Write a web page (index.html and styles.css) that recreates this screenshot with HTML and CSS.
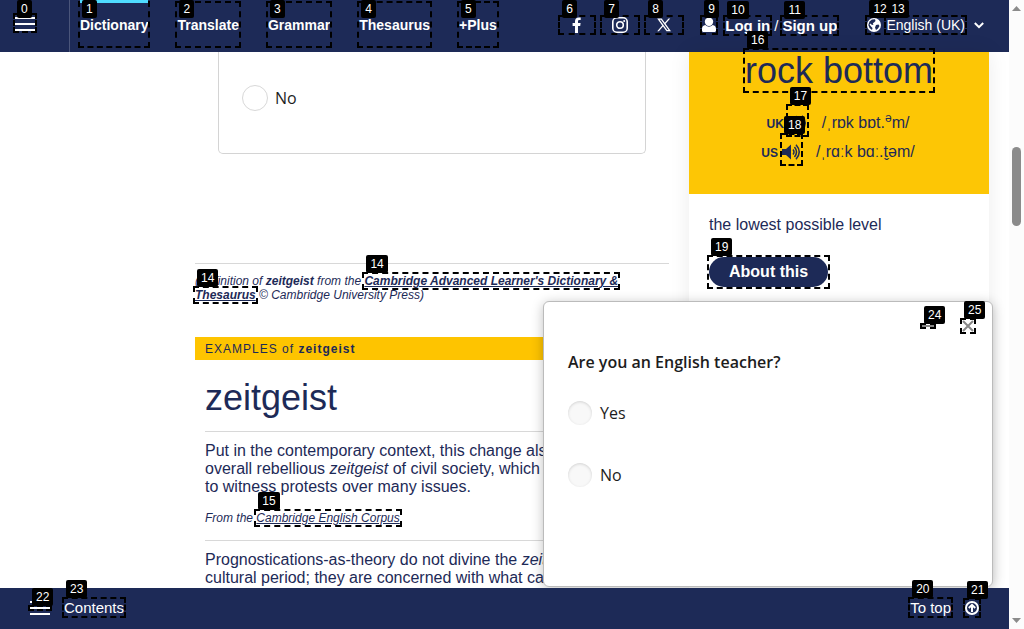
FILE: index.html
```html
<!DOCTYPE html>
<html lang="en">
<head>
<meta charset="utf-8">
<title>zeitgeist | Dictionary</title>
<meta name="viewport" content="width=device-width, initial-scale=1">
<link rel="stylesheet" href="styles.css">
</head>
<body>
<div class="app">
  <header class="header">
    <div class="menu-cell">
      <button class="menu target" type="button" aria-label="Open menu"><span class="bar"></span><span class="bar"></span><span class="bar"></span><span class="hint">0</span></button>
    </div>
    <nav class="nav" aria-label="Main">
      <a class="nav-link current target" href="#dictionary">Dictionary<span class="hint">1</span></a>
      <a class="nav-link target" href="#translate">Translate<span class="hint">2</span></a>
      <a class="nav-link target" href="#grammar">Grammar<span class="hint">3</span></a>
      <a class="nav-link target" href="#thesaurus">Thesaurus<span class="hint">4</span></a>
      <a class="nav-link target" href="#plus">+Plus<span class="hint">5</span></a>
    </nav>
    <div class="social">
      <a class="social-link target" href="#facebook" aria-label="Facebook"><svg width="14" height="16" viewBox="-2 0 14 16"><path fill="#fff" d="M3 16V9H.6V6.100H3V4.200C3 1.700 4.500.4 6.700.4c1 0 2 .2 2 .2V3H7.400C6.300 3 6 3.600 6 4.300v1.800h2.600L8.200 9H6v7z"/></svg><span class="hint">6</span></a>
      <a class="social-link target" href="#instagram" aria-label="Instagram"><svg width="16" height="16" viewBox="0 0 16 16" fill="none" stroke="#fff"><rect x=".8" y=".8" width="14.400" height="14.400" rx="4" stroke-width="1.600"/><circle cx="8" cy="8" r="3.300" stroke-width="1.600"/><circle cx="12.200" cy="3.900" r="1" fill="#fff" stroke="none"/></svg><span class="hint">7</span></a>
      <a class="social-link target" href="#x" aria-label="X"><svg width="16" height="16" viewBox="0 0 16 16"><path fill="#fff" fill-rule="evenodd" d="M1.200 1.500h4.500l3.100 4.200 3.700-4.200h1.700L9.600 6.800l5.400 7.400h-4.500L7 9.500l-4.100 4.700H1.200l5-5.800zm2.500 1.300 7.500 10.100h1.300L5 2.800z"/></svg><span class="hint">8</span></a>
    </div>
    <div class="account">
      <a class="user target" href="#account" aria-label="Account"><svg width="14" height="16" viewBox="0 0 14 16" fill="#fff"><circle cx="7" cy="4.800" r="4.200"/><path d="M3.500 8C1 8.400 0 9.800 0 12v1.500C0 14.300.7 15 1.500 15h11c.8 0 1.500-.7 1.500-1.500V12c0-2.200-1-3.600-3.500-4-2 2.200-5 2.200-7 0z"/></svg><span class="hint">9</span></a>
      <div class="auth"><a class="auth-link target" href="#login">Log in<span class="hint">10</span></a><span>/</span><a class="auth-link target" href="#signup">Sign up<span class="hint">11</span></a></div>
    </div>
    <div class="language">
      <button class="lang target" type="button"><svg width="14" height="14" viewBox="0 0 14 14"><circle cx="7" cy="7" r="7" fill="#fff"/><path fill="#1d2a57" d="M5 1.500 8 1.200 8.500 3 7 4.500 5.800 5.200 6.500 6.500 5 7 3.500 5.500 2.500 6.500 4 8.500 5.500 10 5 12 2.500 10 1.300 7 2.500 3.500zM9 7l2.500-.5 1 1.500-1.500 2.500L9 12 8 9.500z"/></svg><span class="hint">12</span><span class="lang-name target">English (UK)<span class="hint">13</span></span></button>
      <svg width="10" height="7" viewBox="0 0 10 7" fill="none" stroke="#fff" stroke-width="2"><path d="M.8 1 5 5.200 9.200 1"/></svg>
    </div>
  </header>

  <main class="main">
    <article class="entry">
      <div class="poll">
        <label class="choice"><input class="radio outlined" type="radio" name="poll"><span>No</span></label>
      </div>
      <p class="source">(Definition of <b>zeitgeist</b> from the <a class="source-link target" href="#cald"><span class="hint">14</span>Cambridge Advanced Learner's Dictionary &amp; <span class="fragment">Thesaurus<span class="hint">14</span></span></a> © Cambridge University Press)</p>
      <div class="band">EXAMPLES of <b>zeitgeist</b></div>
      <section class="examples">
        <h2 class="word">zeitgeist</h2>
        <div class="example">
          <p class="quote">Put in the contemporary context, this change also<br>overall rebellious <i>zeitgeist</i> of civil society, which<br>to witness protests over many issues.</p>
          <p class="origin">From the <a class="target" href="#corpus">Cambridge English Corpus<span class="hint">15</span></a></p>
        </div>
        <div class="example">
          <p class="quote">Prognostications-as-theory do not divine the <i>zeitgeist</i><br>cultural period; they are concerned with what can</p>
        </div>
      </section>
    </article>

    <aside class="daily">
      <div class="daily-head">
        <h2 class="daily-word"><a class="target" href="#rock-bottom">rock bottom<span class="hint">16</span></a></h2>
        <div class="pron"><b class="region">UK</b><button class="speaker target" type="button" aria-label="Listen, UK"><svg width="19" height="16" viewBox="0 0 19 16"><path fill="#1d2a57" d="M0 5h4l5-4.500v15L4 11H0z"/><path fill="none" stroke="#1d2a57" stroke-width="1.500" d="M11 5.500q2 2.500 0 5M12.500 3q4 5 0 10M14 .8q6.500 7.200 0 14.400"/></svg><span class="hint">17</span></button><span class="ipa">/ˌrɒk bɒt.<sup>ə</sup>m/</span></div>
        <div class="pron"><b class="region">US</b><button class="speaker target" type="button" aria-label="Listen, US"><svg width="19" height="16" viewBox="0 0 19 16"><path fill="#1d2a57" d="M0 5h4l5-4.500v15L4 11H0z"/><path fill="none" stroke="#1d2a57" stroke-width="1.500" d="M11 5.500q2 2.500 0 5M12.500 3q4 5 0 10M14 .8q6.500 7.200 0 14.400"/></svg><span class="hint">18</span></button><span class="ipa">/ˌrɑːk bɑː.t̬əm/</span></div>
      </div>
      <div class="daily-body">
        <p class="meaning">the lowest possible level</p>
        <a class="about target" href="#about">About this<span class="hint">19</span></a>
      </div>
    </aside>
  </main>

  <footer class="footer">
    <button class="toc" type="button" aria-label="Open contents"><span class="bar"></span><span class="bar target"><span class="hint">22</span></span><span class="bar"></span></button>
    <a class="foot-link target" href="#contents">Contents<span class="hint">23</span></a>
    <a class="foot-link to-top target" href="#top">To top<span class="hint">20</span></a>
    <a class="up target" href="#top" aria-label="Back to top"><svg width="14" height="16" viewBox="0 -1 14 16" fill="none" stroke="#fff" stroke-width="2"><circle cx="7" cy="7" r="6"/><path d="M7 11V4M3.800 7 7 3.800 10.200 7"/></svg><span class="hint">21</span></a>
  </footer>

  <section class="survey" role="dialog" aria-labelledby="survey-title">
    <div class="controls">
      <button class="minimise target" type="button" aria-label="Minimise"><span class="hint">24</span></button>
      <button class="close target" type="button" aria-label="Close"><svg width="12" height="12" viewBox="0 0 12 12" stroke="#888" stroke-width="2"><path d="m1 1 10 10M11 1 1 11"/></svg><span class="hint">25</span></button>
    </div>
    <h3 class="survey-title" id="survey-title">Are you an English teacher?</h3>
    <div class="answers">
      <label class="choice"><input class="radio inset" type="radio" name="teacher"><span>Yes</span></label>
      <label class="choice"><input class="radio inset" type="radio" name="teacher"><span>No</span></label>
    </div>
  </section>
</div>
<div class="scroller" aria-hidden="true">
  <svg width="9" height="5" viewBox="0 0 9 5"><path fill="#8b8b8b" d="M4.500 0 9 5H0z"/></svg>
  <div class="track"><div class="thumb"></div></div>
  <svg width="9" height="5" viewBox="0 0 9 5"><path fill="#8b8b8b" d="M0 0h9L4.500 5z"/></svg>
</div>
</body>
</html>
```

FILE: styles.css
```css
* { box-sizing: border-box; }

body {
  --navy: #1d2a57;
  --yellow: #fec400;
  margin: 0;
  height: 100vh;
  display: flex;
  overflow: hidden;
  background: #fff;
  color: var(--navy);
  font-family: "Liberation Sans", Arial, sans-serif;
  font-size: 16px;
}

h2, h3, p { margin: 0; font-weight: 400; }
a { color: inherit; }
button { padding: 0; border: 0; background: none; color: inherit; font: inherit; }
svg { display: block; }

.app { position: relative; flex: 1; min-width: 0; display: flex; flex-direction: column; }

/* Keyboard hints */
.target { position: relative; outline: 2px dashed #000; }
.hint {
  position: absolute;
  top: -19px;
  left: 2px;
  z-index: 3;
  padding: 0 4px;
  border-radius: 2px;
  background: #000;
  color: #fff;
  font: 12px/18px "Liberation Sans", Arial, sans-serif;
  white-space: nowrap;
}
.fragment { position: relative; }

/* Header */
.header {
  display: flex;
  align-items: center;
  height: 52px;
  padding-right: 25px;
  background: var(--navy);
  color: #fff;
  font-size: 15px;
}
.header a { text-decoration: none; }
.menu-cell {
  align-self: stretch;
  display: flex;
  width: 70px;
  padding: 15px;
  border-right: 1px solid #4a557a;
}
.menu { display: flex; flex-direction: column; gap: 4px; width: 20px; height: 16px; padding-top: 2px; }
.bar { display: block; width: 20px; height: 2px; background: #fff; }
.menu .hint { top: -15px; }
.nav { align-self: stretch; display: flex; gap: 29px; padding: 3px 10px; }
.nav-link { height: 43px; font-size: 14px; font-weight: 700; line-height: 45px; }
.nav-link .hint { top: -3px; }
.current::before {
  content: "";
  position: absolute;
  top: -3px;
  left: 0;
  right: 0;
  height: 3px;
  background: #4fdcff;
}
.social, .account, .language { padding-bottom: 2px; }
.social { display: flex; gap: 8px; margin-left: auto; }
.social-link { display: flex; padding: 0 10px; }
.social-link .hint { top: -17px; }
.account { display: flex; align-items: center; gap: 9px; margin-left: 20px; }
.user .hint { top: -17px; }
.auth { display: flex; gap: 4px; line-height: 17px; }
.auth-link { font-weight: 700; }
.auth-link .hint { top: -16px; }
.language { display: flex; align-items: center; gap: 9px; margin-left: 30px; }
.lang { display: flex; align-items: center; gap: 5px; font-size: 14px; line-height: 16px; }
.lang .hint { top: -17px; }
.lang-name .hint { left: 1px; }

/* Page */
.main {
  position: relative;
  z-index: 1;
  flex: 1;
  min-height: 0;
  display: grid;
  grid-template-columns: minmax(0, 1fr) 300px;
  grid-template-rows: minmax(0, 1fr);
  gap: 20px;
  padding: 0 20px 0 195px;
}
.poll {
  margin: 0 23px;
  padding: 33px 23px 42px;
  border: 1px solid #d4d4d4;
  border-top: 0;
  border-radius: 0 0 5px 5px;
}
.choice {
  display: flex;
  align-items: center;
  gap: 8px;
  color: #1d1d1d;
  font: 16px/24px "Open Sans", sans-serif;
}
.poll .choice { gap: 7px; }
.radio { appearance: none; margin: 0; border-radius: 50%; }
.outlined { width: 26px; height: 26px; border: 1px solid #d8d8d8; background: #fff; }
.inset { width: 24px; height: 24px; background: #f8f8f8; box-shadow: inset 0 1px 3px rgba(0, 0, 0, .15); }
.source {
  margin-top: 109px;
  padding-top: 10px;
  border-top: 1px solid #d8d8d8;
  font-size: 12px;
  font-style: italic;
  line-height: 14px;
}
.source-link { font-weight: 700; }
.band {
  margin-top: 35px;
  padding: 1px 10px 0;
  background: var(--yellow);
  font-size: 12px;
  line-height: 22px;
  letter-spacing: 1px;
}
.examples { padding: 17px 10px 0; }
.word { font-size: 36px; line-height: 42px; margin-bottom: 12px; }
.example { padding: 10px 0 15px; border-top: 1px solid #d8d8d8; }
.quote { line-height: 18px; white-space: nowrap; }
.origin { margin-top: 15px; font-size: 12px; font-style: italic; line-height: 14px; }

/* Word of the day */
.daily { background: #fff; box-shadow: 0 0 20px rgba(0, 0, 0, .08); }
.daily-head { padding-bottom: 30px; background: #fdc605; text-align: center; }
.daily-word { padding-bottom: 17px; font-size: 36px; line-height: 37px; }
.daily-word a { text-decoration: none; }
.pron { display: flex; justify-content: center; align-items: center; height: 29px; padding-right: 2px; line-height: 18px; }
.region { margin-right: 4px; padding-top: 6px; font-size: 12px; }
.speaker { width: 19px; height: 29px; padding-top: 4px; }
.ipa { margin-left: 15px; padding-top: 5px; }
.ipa sup { font-size: 12px; line-height: 0; }
.daily-body { padding: 21px 20px; }
.meaning { margin-bottom: 22px; line-height: 20px; }
.about {
  display: inline-block;
  padding: 0 20px;
  border-radius: 15px;
  background: var(--navy);
  color: #fff;
  font-weight: 700;
  line-height: 30px;
  text-decoration: none;
}
.about.target { outline: 0; }
.about::after { content: ""; position: absolute; inset: 0; outline: 2px dashed #000; }

/* Bottom bar */
.footer {
  position: relative;
  z-index: 4;
  display: flex;
  align-items: center;
  height: 41px;
  padding: 0 30px 2px;
  background: var(--navy);
  color: #fff;
  font-size: 15px;
  line-height: 17px;
}
.footer a { text-decoration: none; }
.toc { display: flex; flex-direction: column; gap: 4px; margin-right: 14px; }
.to-top { margin-left: auto; margin-right: 14px; }

/* Survey pop-up */
.survey {
  position: absolute;
  right: 16px;
  bottom: 42px;
  z-index: 3;
  width: 450px;
  max-width: 100%;
  padding: 18px 18px 99px 24px;
  border: 1px solid #bbb;
  border-radius: 6px;
  background: #fff;
  box-shadow: 0 2px 12px rgba(0, 0, 0, .25);
  color: #1d1d1d;
}
.controls { display: flex; justify-content: flex-end; align-items: center; gap: 28px; }
.minimise { width: 12px; height: 2px; background: #888; }
.survey-title { margin: 18px 0 27px; font: 600 16px/24px "Open Sans", sans-serif; }
.answers { display: grid; gap: 38px; }

/* Scroll bar */
.scroller {
  flex: none;
  display: flex;
  flex-direction: column;
  align-items: center;
  width: 15px;
  padding: 6px 0;
  background: #fcfcfc;
}
.track { flex: 1; padding-top: 136px; }
.thumb { width: 9px; height: 79px; border-radius: 5px; background: #8b8b8b; }
```
